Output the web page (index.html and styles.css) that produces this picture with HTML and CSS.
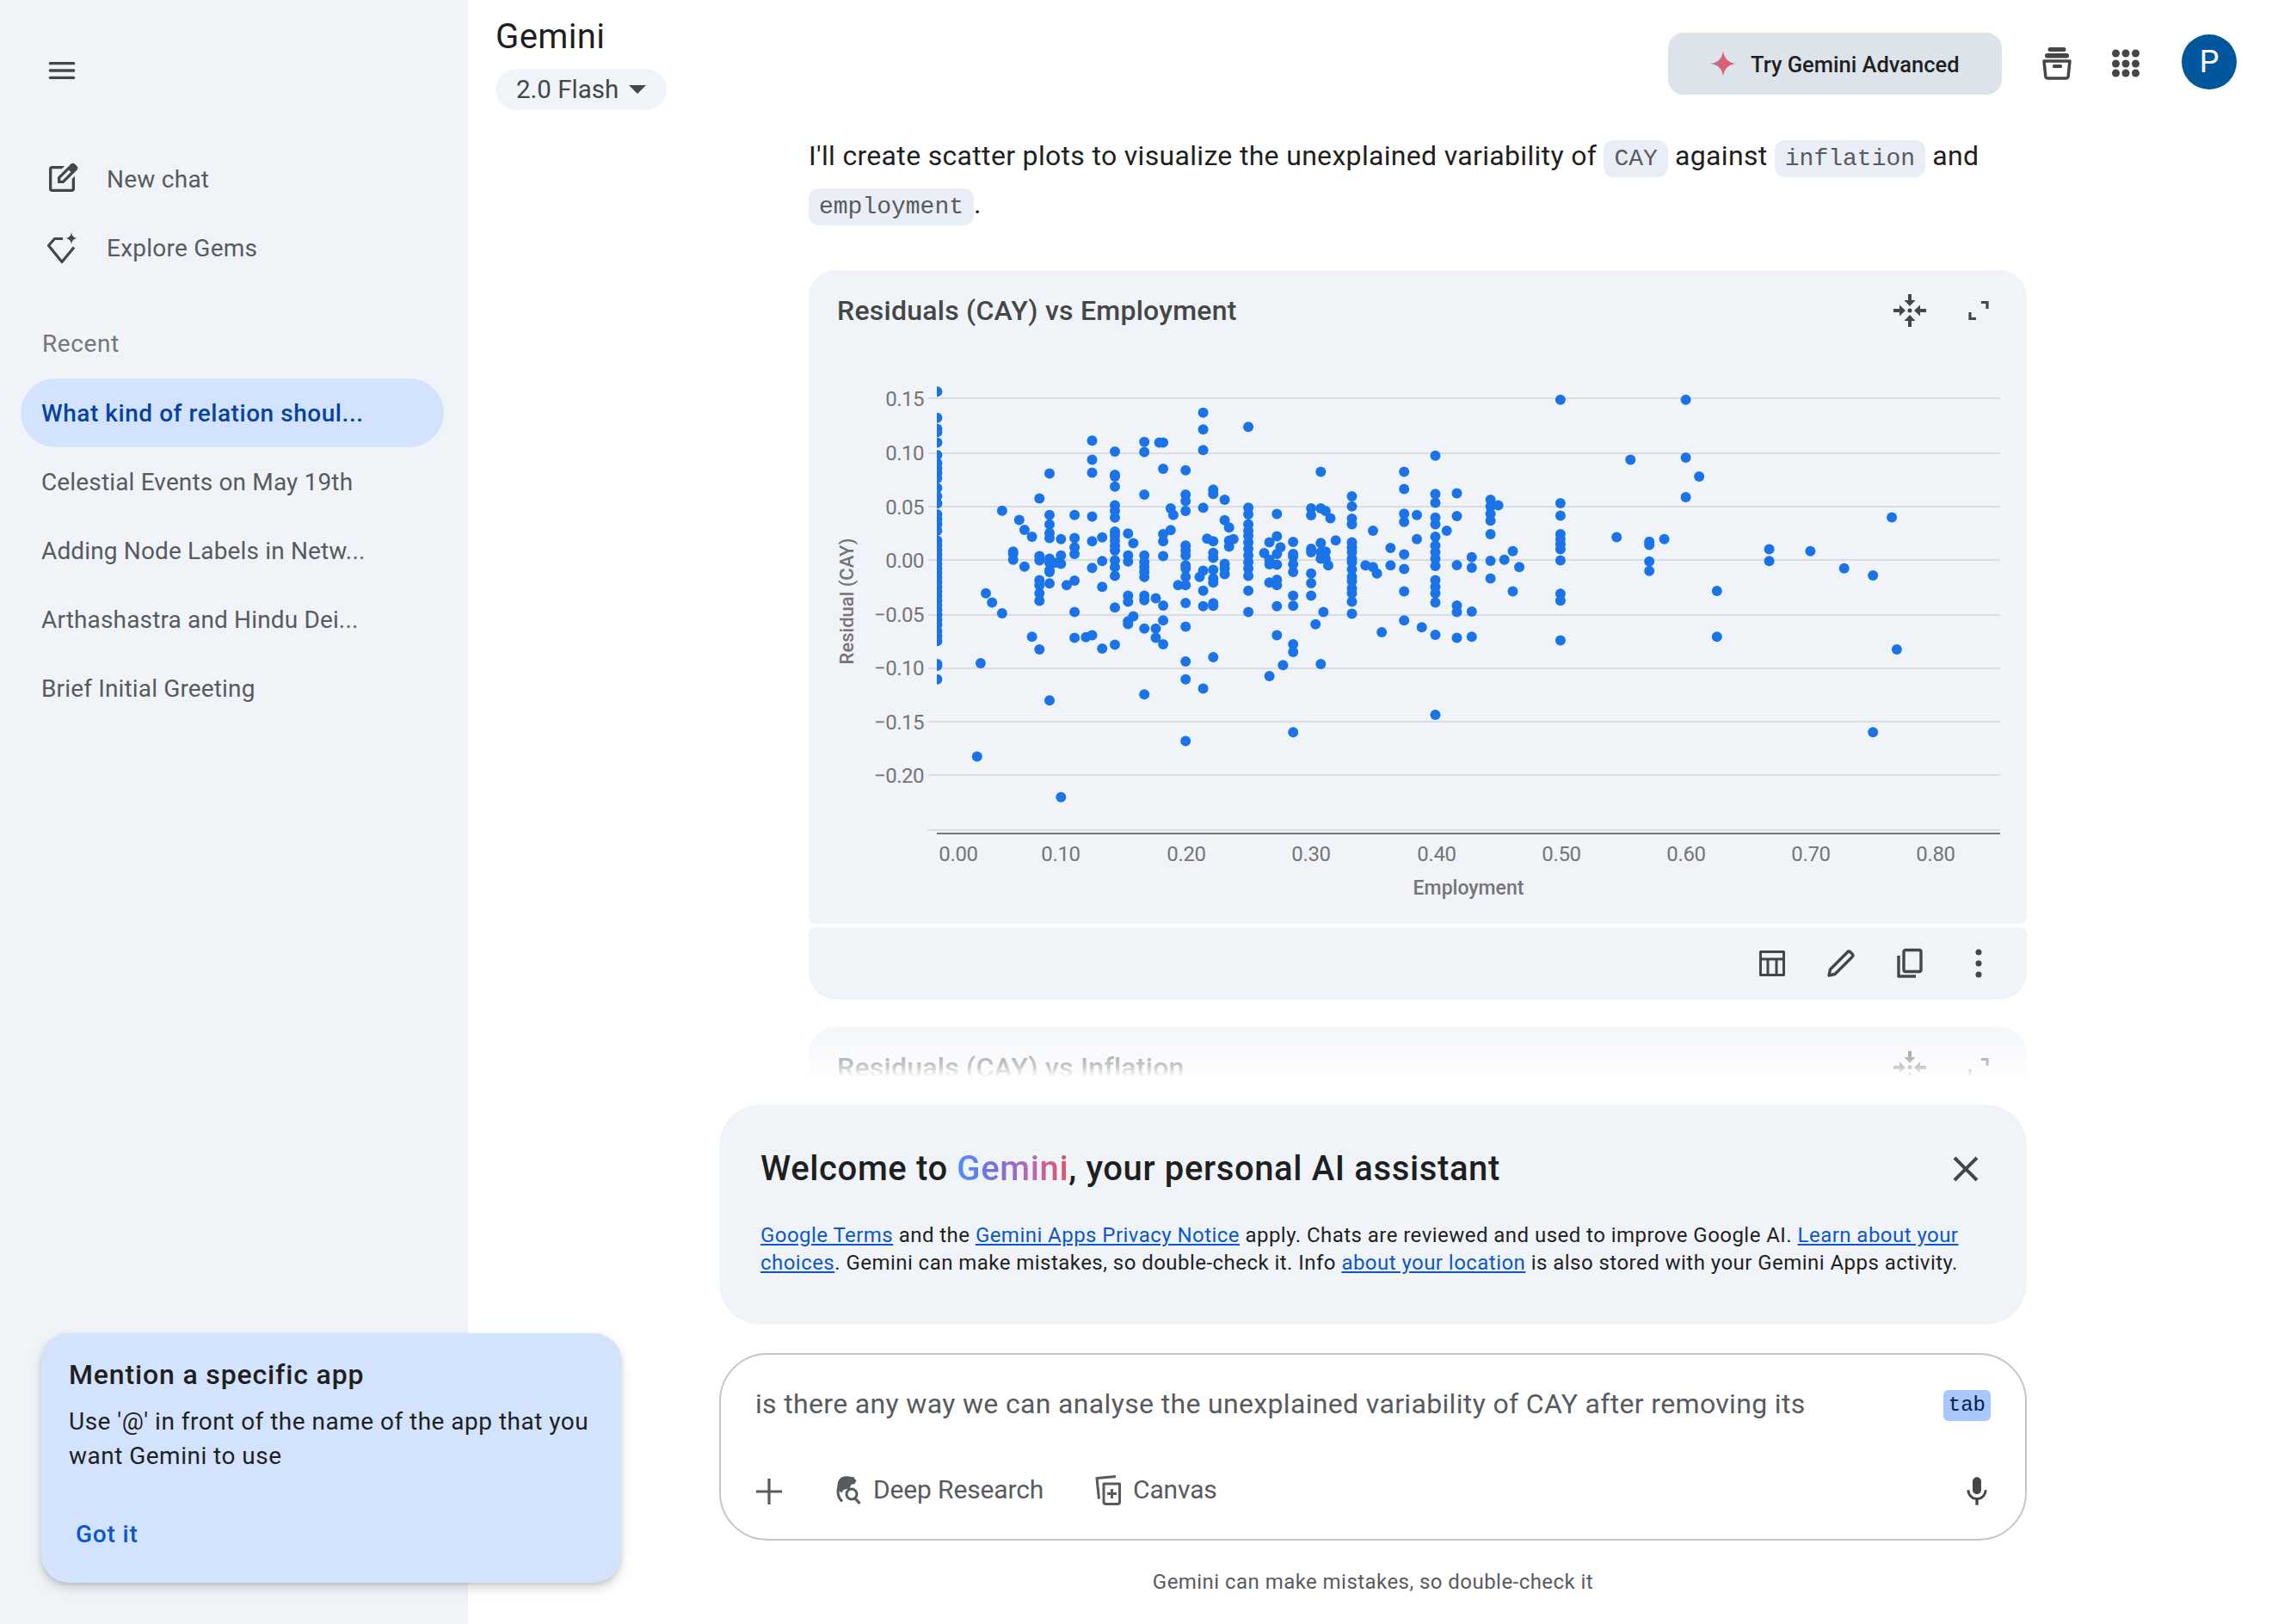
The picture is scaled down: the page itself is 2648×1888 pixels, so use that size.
FILE: index.html
```html
<!DOCTYPE html>
<html lang="en">
<head>
<meta charset="utf-8">
<title>Gemini</title>
<link rel="stylesheet" href="styles.css">
</head>
<body>
<div class="app">
  <aside class="sidebar">
    <button class="menu-btn" aria-label="Menu">
      <svg class="ic40" viewBox="0 0 24 24"><path fill="#444746" d="M3.8 18h16.4a1 1 0 0 0 0-2H3.800a1 1 0 0 0 0 2zm0-5h16.400a1 1 0 0 0 0-2H3.800a1 1 0 0 0 0 2zM2.800 7a1 1 0 0 0 1 1h16.400a1 1 0 0 0 0-2H3.800a1 1 0 0 0-1 1z"/></svg>
    </button>
    <nav class="primary-nav">
      <a class="nav-item">
        <svg class="ic40" viewBox="0 0 24 24"><path fill="#444746" d="M5 21q-.825 0-1.412-.587T3 19V5q0-.825.588-1.412T5 3h8.925l-2 2H5v14h14v-6.950l2-2V19q0 .825-.587 1.413T19 21H5Zm4-6v-4.250l9.175-9.175q.3-.3.675-.45t.75-.15q.4 0 .763.15t.662.45L22.425 3q.275.3.425.663T23 4.400t-.137.738t-.438.662L13.250 15H9Zm2-2h1.400l5.800-5.800l-.7-.7l-.725-.7L11 11.575V13Z"/></svg>
        <span>New chat</span>
      </a>
      <a class="nav-item">
        <svg class="ic40" viewBox="0 0 40 40"><path fill="none" stroke="#444746" stroke-width="3.200" stroke-linejoin="round" d="M21 9.500H11.500L4.500 17.500 20 36.500l14-17"/><path fill="#444746" d="M31 2c.6 4.300 2.400 6.200 6.800 7-4.400.8-6.200 2.700-6.800 7-.6-4.300-2.400-6.200-6.800-7 4.400-.8 6.200-2.700 6.800-7z"/></svg>
        <span>Explore Gems</span>
      </a>
    </nav>
    <h2 class="recent-title">Recent</h2>
    <ul class="recent-list">
      <li class="recent-item is-active">What kind of relation shoul...</li>
      <li class="recent-item">Celestial Events on May 19th</li>
      <li class="recent-item">Adding Node Labels in Netw...</li>
      <li class="recent-item">Arthashastra and Hindu Dei...</li>
      <li class="recent-item">Brief Initial Greeting</li>
    </ul>
  </aside>

  <main class="main">
    <header class="topbar">
      <div class="brand">
        <h1 class="brand-title">Gemini</h1>
        <button class="model-chip"><span class="chip-label">2.0 Flash</span><svg class="chip-caret" viewBox="0 0 20 10"><path fill="#444746" d="M0 0h20L10 10z"/></svg></button>
      </div>
      <div class="top-actions">
        <button class="upgrade-btn">
          <svg class="star" viewBox="0 0 30 30"><defs><linearGradient id="sg" x1="0" x2="1" y1="0" y2="0"><stop offset="0" stop-color="#9177c7"/><stop offset=".5" stop-color="#d96570"/><stop offset="1" stop-color="#e0555f"/></linearGradient></defs><path fill="url(#sg)" d="M15 0c1 9 6 14 15 15-9 1-14 6-15 15-1-9-6-14-15-15 9-1 14-6 15-15z"/></svg>
          <span>Try Gemini Advanced</span>
        </button>
        <button class="top-icon" aria-label="Temporary chat">
          <svg class="ic40" viewBox="0 0 40 40"><g fill="#444746"><rect x="9.500" y="1" width="21" height="5" rx="2.500"/><rect x="6" y="8" width="28" height="5.500" rx="2.500"/><rect x="15" y="21" width="11" height="4" rx="1.500"/></g><path fill="none" stroke="#444746" stroke-width="3.500" stroke-linejoin="round" d="M5 17h30l-1.800 17.500a3 3 0 0 1-3 2.500H9.800a3 3 0 0 1-3-2.500z"/></svg>
        </button>
        <button class="top-icon" aria-label="Google apps">
          <svg class="ic40" viewBox="0 0 40 40"><g fill="#444746"><circle cx="8.500" cy="8" r="4.500"/><circle cx="20" cy="8" r="4.500"/><circle cx="31.500" cy="8" r="4.500"/><circle cx="8.500" cy="20" r="4.500"/><circle cx="20" cy="20" r="4.500"/><circle cx="31.500" cy="20" r="4.500"/><circle cx="8.500" cy="31" r="4.500"/><circle cx="20" cy="31" r="4.500"/><circle cx="31.500" cy="31" r="4.500"/></g></svg>
        </button>
        <div class="avatar">P</div>
      </div>
    </header>

    <section class="chat">
      <p class="reply">I'll create scatter plots to visualize the unexplained variability of <code>CAY</code> against <code>inflation</code> and <code>employment</code>.</p>

      <div class="chart-card">
        <div class="chart-head">
          <h3 class="chart-title">Residuals (CAY) vs Employment</h3>
          <div class="chart-tools">
            <svg class="ic40" viewBox="0 0 40 40"><g fill="#444746"><path d="M18 1h4v7h4.500L20 15l-6.500-7H18zM18 39h4v-7h4.500L20 25l-6.500 7H18zM1 18v4h7v4.500L15 20 8 13.500V18zM39 18v4h-7v4.500L25 20l7-6.500V18z"/><circle cx="20" cy="20" r="2.500"/></g></svg>
            <svg class="ic40" viewBox="0 0 40 40"><path fill="none" stroke="#444746" stroke-width="3.200" d="M23 10.500h7V18M10 22v7.500h7"/></svg>
          </div>
        </div>
        <svg class="chart-plot" id="plot" viewBox="940 408 1416 666">
          <g class="grid" id="grid"></g>
          <line class="axis" x1="1089" x2="2325" y1="969" y2="969"/>
          <g class="y-labels">
            <text x="1074" y="472">0.15</text><text x="1074" y="535">0.10</text><text x="1074" y="598">0.05</text><text x="1074" y="660">0.00</text><text x="1074" y="723">−0.05</text><text x="1074" y="785">−0.10</text><text x="1074" y="848">−0.15</text><text x="1074" y="910">−0.20</text>
          </g>
          <g class="x-labels">
            <text x="1114" y="1001">0.00</text><text x="1233" y="1001">0.10</text><text x="1379" y="1001">0.20</text><text x="1524" y="1001">0.30</text><text x="1670" y="1001">0.40</text><text x="1815" y="1001">0.50</text><text x="1960" y="1001">0.60</text><text x="2105" y="1001">0.70</text><text x="2250" y="1001">0.80</text>
          </g>
          <text class="axis-title" x="1707" y="1040">Employment</text>
          <text class="axis-title axis-title-y" transform="translate(992 699) rotate(-90)">Residual (CAY)</text>
          <defs><clipPath id="dotclip"><rect x="1089" y="440" width="1240" height="530"/></clipPath></defs>
          <g class="dots" id="dots" clip-path="url(#dotclip)"></g>
        </svg>
      </div>
      <div class="chart-foot">
        <svg class="ic40" viewBox="0 0 40 40"><path fill="none" stroke="#444746" stroke-width="3" stroke-linejoin="round" d="M6.500 6.500h27v27h-27zM6.500 15h27M15 15v18.500M25 15v18.500"/></svg>
        <svg class="ic40" viewBox="0 0 40 40"><path fill="none" stroke="#444746" stroke-width="3.400" stroke-linejoin="round" d="M6 34l1.500-7L27.500 7a2.500 2.500 0 0 1 3.500 0l2 2a2.500 2.500 0 0 1 0 3.500L13 32.500z"/></svg>
        <svg class="ic40" viewBox="0 0 40 40"><path fill="none" stroke="#444746" stroke-width="3.400" stroke-linejoin="round" d="M15 4.500h16a2 2 0 0 1 2 2v21a2 2 0 0 1-2 2H15a2 2 0 0 1-2-2v-21a2 2 0 0 1 2-2zM7 11v24h20"/></svg>
        <svg class="ic40" viewBox="0 0 40 40"><g fill="#444746"><circle cx="20" cy="7" r="3.500"/><circle cx="20" cy="20" r="3.500"/><circle cx="20" cy="33" r="3.500"/></g></svg>
      </div>

      <div class="chart-card chart-card-next">
        <div class="chart-head">
          <h3 class="chart-title">Residuals (CAY) vs Inflation</h3>
          <div class="chart-tools">
            <svg class="ic40" viewBox="0 0 40 40"><g fill="#444746"><path d="M18 1h4v7h4.500L20 15l-6.500-7H18zM18 39h4v-7h4.500L20 25l-6.500 7H18zM1 18v4h7v4.500L15 20 8 13.500V18zM39 18v4h-7v4.500L25 20l7-6.500V18z"/><circle cx="20" cy="20" r="2.500"/></g></svg>
            <svg class="ic40" viewBox="0 0 40 40"><path fill="none" stroke="#444746" stroke-width="3.200" d="M23 10.500h7V18M10 22v7.500h7"/></svg>
          </div>
        </div>
      </div>
      <div class="chat-fade"></div>
    </section>

    <section class="notice">
      <div class="notice-head">
        <h2 class="notice-title">Welcome to <span class="gem-grad">Gemini</span>, your personal AI assistant</h2>
        <svg class="notice-close" viewBox="0 0 30 30"><path fill="none" stroke="#444746" stroke-width="4" d="M2 2l26 26M28 2L2 28"/></svg>
      </div>
      <p class="notice-body"><a>Google Terms</a> and the <a>Gemini Apps Privacy Notice</a> apply. Chats are reviewed and used to improve Google AI. <a>Learn about your choices</a>. Gemini can make mistakes, so double-check it. Info <a>about your location</a> is also stored with your Gemini Apps activity.</p>
    </section>

    <section class="composer">
      <div class="composer-top">
        <span class="draft">is there any way we can analyse the unexplained variability of CAY after removing its</span>
        <kbd class="tab-key">tab</kbd>
      </div>
      <div class="composer-tools">
        <svg class="plus" viewBox="0 0 30 30"><path fill="none" stroke="#575b5f" stroke-width="3.200" d="M15 0v30M0 15h30"/></svg>
        <button class="tool tool-deep">
          <svg class="ic40" viewBox="0 0 40 40"><path fill="none" stroke="#575b5f" stroke-width="3" d="M27 7A15.500 15.500 0 0 0 13 33.500"/><path fill="#575b5f" d="M15 4.500c5-1 11 0 14.500 4.500l-2 4-4 1-2 4.500-7 1.500-2.500 3.500-4-4C6.500 11 9 6 15 4.500z"/><circle cx="24" cy="25" r="6" fill="none" stroke="#575b5f" stroke-width="3"/><path stroke="#575b5f" stroke-width="3.200" d="M28 30l5.500 6"/></svg>
          <span>Deep Research</span>
        </button>
        <button class="tool tool-canvas">
          <svg class="ic40" viewBox="0 0 40 40"><path fill="none" stroke="#575b5f" stroke-width="3" stroke-linejoin="round" d="M29 4.500L7 6.500l2.500 24M15 13h18.500v21a2.500 2.500 0 0 1-2.500 2.500H17.500a2.500 2.500 0 0 1-2.500-2.500z"/><path stroke="#575b5f" stroke-width="3" d="M24.500 19v11M19 24.500h11"/></svg>
          <span>Canvas</span>
        </button>
        <svg class="ic40 mic" viewBox="0 0 24 24"><path fill="#444746" d="M12 14a3 3 0 0 0 3-3V5a3 3 0 0 0-6 0v6a3 3 0 0 0 3 3zM11 21.500v-3.600a7 7 0 0 1-6-6.900h1.800a5.200 5.200 0 0 0 10.400 0H19a7 7 0 0 1-6 6.900v3.600z"/></svg>
      </div>
    </section>
    <p class="disclaimer">Gemini can make mistakes, so double-check it</p>
  </main>

  <aside class="tip">
    <h3 class="tip-title">Mention a specific app</h3>
    <p class="tip-body">Use '@' in front of the name of the app that you want Gemini to use</p>
    <a class="tip-action">Got it</a>
  </aside>
</div>
<script src="chart.js"></script>
</body>
</html>
```
FILE: styles.css
```css
* { box-sizing: border-box; }
html, body { margin: 0; height: 100%; }
body { font-family: Roboto, "Noto Sans", sans-serif; color: #1f1f1f; background: #fff; overflow: hidden; }
button { font: inherit; border: 0; background: none; padding: 0; color: inherit; }
h1, h2, h3, p, ul { margin: 0; padding: 0; font-weight: 400; }
ul { list-style: none; }
.ic40 { width: 40px; height: 40px; display: block; flex: none; }

.app { display: flex; width: 2648px; height: 1888px; position: relative; }

/* Sidebar */
.sidebar { width: 544px; flex: none; background: #f0f4f9; padding: 62px 28px 0 24px; }
.menu-btn { display: block; margin-left: 28px; height: 40px; }
.primary-nav { margin-top: 86px; display: flex; flex-direction: column; gap: 40px; }
.nav-item { display: flex; align-items: center; gap: 32px; padding-left: 28px; height: 40px; font-size: 28px; letter-spacing: .25px; color: #575b5f; }
.recent-title { font-size: 28px; letter-spacing: .6px; color: #747775; margin: 72px 0 0 25px; line-height: 40px; }
.recent-list { margin-top: 20px; }
.recent-item { height: 80px; line-height: 81px; padding-left: 24px; font-size: 28px; letter-spacing: .15px; color: #575b5f; border-radius: 40px; }
.recent-item.is-active { background: #d3e3fd; color: #0842a0; font-weight: 500; letter-spacing: .55px; }

/* Main */
.main { flex: 1; min-width: 0; display: flex; flex-direction: column; align-items: center; position: relative; }
.topbar { align-self: stretch; height: 153px; flex: none; display: flex; justify-content: space-between; padding: 20px 48px 0 32px; }
.brand { display: flex; flex-direction: column; align-items: flex-start; }
.brand-title { font-size: 40px; line-height: 46px; height: 60px; letter-spacing: .4px; color: #1f1f1f; }
.model-chip { height: 48px; width: 199px; padding: 0 24px; border-radius: 24px; background: #f0f4f9; color: #444746; font-size: 29.500px; display: flex; align-items: center; justify-content: space-between; flex: none; }
.chip-label { white-space: nowrap; }
.chip-caret { width: 20px; height: 10px; }
.top-actions { display: flex; align-items: flex-start; padding-top: 18px; }
.upgrade-btn { width: 388px; height: 72px; border-radius: 18px; background: #dde3ea; display: flex; align-items: center; gap: 17px; padding: 2px 0 0 49px; font-size: 25.500px; font-weight: 500; color: #1f1f1f; margin-right: 24px; }
.star { width: 30px; height: 30px; flex: none; margin-top: -2px; }
.top-icon { width: 80px; height: 72px; display: flex; align-items: center; justify-content: center; }
.avatar { width: 64px; height: 64px; border-radius: 50%; background: #00579e; color: #fff; font-size: 36px; display: flex; align-items: center; justify-content: center; margin: 2px 0 0 25px; }

/* Chat */
.chat { width: 1520px; flex: none; height: 1099px; padding-left: 104px; overflow: hidden; position: relative; }
.reply { font-size: 32px; line-height: 56px; letter-spacing: .32px; }
.reply code { font-family: "Liberation Mono", monospace; font-size: 28px; line-height: 1; letter-spacing: 0; color: #575b5f; background: #e9eef6; border-radius: 12px; padding: 6px 12px; }
.chart-card { margin-top: 49px; background: #f0f4f9; border-radius: 32px 32px 8px 8px; height: 760px; }
.chart-head { height: 94px; display: flex; align-items: center; justify-content: space-between; padding: 0 36px 0 33px; }
.chart-title { font-size: 32px; font-weight: 500; letter-spacing: .25px; color: #444746; }
.chart-tools { display: flex; gap: 40px; }
.chart-plot { display: block; width: 1416px; height: 666px; }
.grid line { stroke: #d9dde1; stroke-width: 2; }
.axis { stroke: #757575; stroke-width: 2; }
.y-labels text { font-size: 24px; letter-spacing: -.5px; fill: #757575; text-anchor: end; }
.x-labels text { font-size: 24px; letter-spacing: -.3px; fill: #757575; text-anchor: middle; }
.axis-title { font-size: 23px; font-weight: 500; fill: #757575; text-anchor: middle; }
.axis-title-y { font-size: 22px; }
.dots circle { fill: #1a73e8; }
.chart-foot { margin-top: 4px; height: 84px; background: #f0f4f9; border-radius: 8px 8px 32px 32px; display: flex; align-items: center; justify-content: flex-end; gap: 40px; padding-right: 36px; }
.chart-card-next { margin-top: 32px; border-radius: 32px; }
.chat-fade { position: absolute; left: 0; right: 0; bottom: 0; height: 82px; background: linear-gradient(to bottom, rgba(255,255,255,0), rgba(255,255,255,.4) 45%, rgba(255,255,255,.7) 85%, #fff); }

/* Notice */
.notice { width: 1520px; height: 256px; flex: none; margin-top: 32px; background: #f0f4f9; border-radius: 48px; padding: 46px 48px 0; }
.notice-head { display: flex; align-items: center; justify-content: space-between; padding-right: 8px; height: 56px; }
.notice-title { font-size: 40px; font-weight: 500; letter-spacing: .62px; }
.gem-grad { background: linear-gradient(90deg, #4b90ff, #7a6fd8 35%, #b56ab5 65%, #e0555f); -webkit-background-clip: text; background-clip: text; color: transparent; }
.notice-close { width: 30px; height: 30px; margin-top: 2px; }
.notice-body { margin-top: 34px; font-size: 24px; letter-spacing: .46px; line-height: 32px; }
.notice-body a { color: #0b57d0; text-decoration: underline; }

/* Composer */
.composer { width: 1520px; height: 218px; flex: none; margin-top: 33px; border: 2px solid #c4c7c5; border-radius: 56px; padding: 0 40px; position: relative; }
.composer-top { display: flex; justify-content: space-between; align-items: center; height: 113px; }
.draft { font-size: 32px; letter-spacing: .34px; color: #575b5f; }
.tab-key { font-family: "Liberation Mono", monospace; font-size: 24px; color: #041e49; background: #a8c7fa; border-radius: 6px; padding: 0 6px; height: 36px; line-height: 36px; margin: 4px 0 0; }
.composer-tools { display: flex; align-items: center; height: 84px; margin-top: 4px; }
.plus { width: 30px; height: 30px; margin-left: 1px; flex: none; }
.tool { display: flex; align-items: center; gap: 9px; font-size: 30px; letter-spacing: -.15px; color: #575b5f; margin-bottom: 5px; }
.tool-deep { margin-left: 57px; }
.tool-canvas { margin-left: 55px; }
.mic { margin-left: auto; margin-right: -4px; }

.disclaimer { font-size: 24px; letter-spacing: .45px; color: #575b5f; margin-top: 34px; }

/* Tip */
.tip { position: absolute; left: 48px; top: 1550px; width: 674px; height: 290px; background: #d3e3fd; border-radius: 32px; padding: 28px 32px; box-shadow: 0 6px 12px rgba(60,64,67,.22), 0 2px 4px rgba(60,64,67,.12); }
.tip-title { font-size: 32px; font-weight: 500; letter-spacing: .85px; line-height: 40px; }
.tip-body { font-size: 28px; letter-spacing: .48px; line-height: 40px; margin-top: 15px; }
.tip-action { display: block; margin: 51px 0 0 8px; font-size: 28px; font-weight: 500; letter-spacing: .8px; line-height: 40px; color: #0b57d0; }
```
FILE: chart.js
```js
// Scatter data: dot columns measured as [x, [y, y, ...]] in plot units.
var NS = "http://www.w3.org/2000/svg";
var left = [
  [332, [92,172,205,215,247,285,310,325,340,355,385,410,432,465,480,495,515,545,559,573,587,601,615,629,643,657,671,685,699,713,727,741,755,769,785,800,820,835,850,920,925,966]],
  [423,[1201]],[431,[917]],[443,[705]],[457,[733]],[480,[454,766]],[505,[578,585,603]],[519,[482]],[531,[512,624]],[548,[533,837]],
  [565,[417,592,605,665,680,705,728,875]],[588,[341,467,496,522,537,600,612,635,640,675,1030]],[600,[612]],[614,[540,590,615,1324]],[627,[680]],
  [645,[467,537,565,585,666,762,840]],[671,[838]],[685,[241,299,338,472,547,628,832]],[708,[535,607,685,873]],
  [737,[274,345,350,381,438,455,475,517,530,545,560,575,605,625,652,748,861]],[767,[523,590,608,712,730,790,798]],[779,[553,775]],
  [804,[245,276,405,590,610,625,640,655,712,726,812,1012]],[830,[720,812,840]],[847,[247,327,525,547,592,742,787,860]],[838,[247]],
  [864,[447,513]],[870,[467]],[881,[680]],[898,[331,405,425,455,560,575,590,620,630,655,680,734,806,912,966,1154]],[930,[655]],
  [938,[156,207,270,445,636,697,744,994]],[947,[539]],[961,[390,403,547,582,597,634,660,672,735,743,899]],[987,[421,483,615,630,647]],
  [997,[505,545,563]],[1007,[540]],[1041,[199,445,465,495,515,530,550,570,590,610,630,652,697,762]],[1077,[583]],[1089,[550,603,617,672,956]],
  [1106,[464,532,585,618,664,680,744,832]],[1114,[565]],[1120,[923]],[1143,[549,585,593,617,640,712,743,860,883,1127]],
  [1184,[447,468,570,580,645,674,712]],[1194,[799]],[1206,[336,447,552,580,600,920]],[1217,[455,578,600]],[1228,[477]],[1223,[620]],[1240,[544]],[1212,[762]],
  [1277,[410,441,478,495,550,565,580,600,610,632,655,668,690,705,730,767]],[1308,[620]],[1325,[515,625]],[1334,[645]],[1345,[823]],[1365,[567,620]],
  [1396,[336,388,463,488,587,631,699,787]],[1425,[467,540]],[1436,[808]],[1467,[287,403,430,475,495,533,560,580,600,622,665,685,705,733,831,1074]],
  [1493,[515]],[1516,[401,470,619,742,762,840]],[1550,[595,627,760,837]]
];
var right = [
  [73,[421,441,463,484,525,606,660]],[93,[438]],[109,[603]],[131,[577,699]],[148,[625]],[255,[117,431,469,525,540,555,571,605,706,727,848]],
  [401,[534]],[437,[299]],[486,[548,558,608,637]],[525,[540]],[581,[117,293,413]],[616,[350]],[662,[698,837]],[798,[571,607]],[905,[577]],
  [993,[629]],[1068,[651,1127]],[1117,[474]],[1130,[875]]
];
var dots = document.getElementById("dots");
function add(cols, ox, sx) {
  cols.forEach(function (c) {
    c[1].forEach(function (y) {
      var e = document.createElementNS(NS, "circle");
      e.setAttribute("cx", (ox + c[0] / sx).toFixed(1));
      e.setAttribute("cy", (420 + y / 2.613).toFixed(1));
      e.setAttribute("r", 6);
      dots.appendChild(e);
    });
  });
}
add(left, 920, 1.96);
add(right, 1700, 2.238);
var grid = document.getElementById("grid");
[463, 527, 589, 651, 715, 777, 839, 901, 965].forEach(function (y) {
  var l = document.createElementNS(NS, "line");
  l.setAttribute("x1", 1079); l.setAttribute("x2", 2325);
  l.setAttribute("y1", y); l.setAttribute("y2", y);
  grid.appendChild(l);
});
```
